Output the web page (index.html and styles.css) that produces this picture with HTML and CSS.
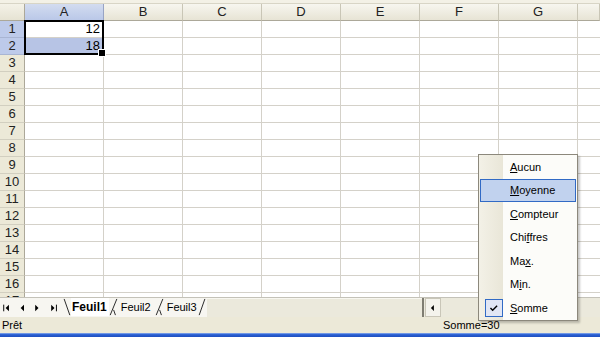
FILE: index.html
```html
<!DOCTYPE html>
<html lang="fr">
<head>
<meta charset="utf-8">
<title>Feuil1</title>
<link rel="stylesheet" href="styles.css">
</head>
<body>
<div class="app">
  <div class="topstrip"></div>
  <div class="sheet">
    <div class="corner"></div>
    <div class="colheads">
      <div class="ch sel">A</div>
      <div class="ch">B</div>
      <div class="ch">C</div>
      <div class="ch">D</div>
      <div class="ch">E</div>
      <div class="ch">F</div>
      <div class="ch">G</div>
      <div class="ch last"></div>
    </div>
    <div class="rowheads">
      <div class="rh sel">1</div>
      <div class="rh sel">2</div>
      <div class="rh">3</div>
      <div class="rh">4</div>
      <div class="rh">5</div>
      <div class="rh">6</div>
      <div class="rh">7</div>
      <div class="rh">8</div>
      <div class="rh">9</div>
      <div class="rh">10</div>
      <div class="rh">11</div>
      <div class="rh">12</div>
      <div class="rh">13</div>
      <div class="rh">14</div>
      <div class="rh">15</div>
      <div class="rh">16</div>
      <div class="rh">17</div>
    </div>
    <div class="cells">
      <div class="val r1">12</div>
      <div class="val r2 shaded">18</div>
      <div class="selbox"></div>
    </div>
  </div>

  <div class="tabstrip">
    <div class="nav">
      <svg class="nb w16" viewBox="0 0 16 20"><rect x="3" y="7" width="1" height="7"/><path d="M9 7 L9 14 L5.5 10.5 Z"/></svg>
      <svg class="nb w15" viewBox="0 0 15 20"><path d="M8 7 L8 14 L4.5 10.5 Z"/></svg>
      <svg class="nb w16" viewBox="0 0 16 20"><path d="M4 7 L4 14 L7.5 10.5 Z"/></svg>
      <svg class="nb w15" viewBox="0 0 15 20"><path d="M4 7 L4 14 L7.5 10.5 Z"/><rect x="9" y="7" width="1" height="7"/></svg>
    </div>
    <div class="tabs">
      <svg class="edge w9" viewBox="0 0 9 20"><path d="M2 1 L8 18"/></svg>
      <span class="tab active">Feuil1</span>
      <svg class="edge w10" viewBox="0 0 10 20"><path d="M8 1 L1 18 M4.6 12.5 L6.5 18"/></svg>
      <span class="tab t2">Feuil2</span>
      <svg class="edge w10" viewBox="0 0 10 20"><path d="M8 1 L1 18 M4.6 12.5 L6.5 18"/></svg>
      <span class="tab t3">Feuil3</span>
      <svg class="edge w9" viewBox="0 0 9 20"><path d="M7 1 L1 18"/></svg>
    </div>
    <div class="hscroll"></div>
    <div class="split"></div>
    <div class="sbtn"><svg viewBox="0 0 16 20" class="sico"><path d="M9 7 L9 14 L5.5 10.5 Z"/></svg></div>
    <div class="rest"></div>
  </div>

  <div class="status">
    <span class="ready">Prêt</span>
    <span class="sum">Somme=30</span>
  </div>
  <div class="taskbar"></div>

  <div class="menu">
    <div class="mi"><span class="ico"></span><span><u>A</u>ucun</span></div>
    <div class="mi hl"><span class="ico"></span><span><u>M</u>oyenne</span></div>
    <div class="mi"><span class="ico"></span><span><u>C</u>ompteur</span></div>
    <div class="mi"><span class="ico"></span><span>Chi<u>f</u>fres</span></div>
    <div class="mi"><span class="ico"></span><span>Ma<u>x</u>.</span></div>
    <div class="mi"><span class="ico"></span><span>M<u>i</u>n.</span></div>
    <div class="mi"><span class="ico checked"><svg viewBox="0 0 18 18" class="chk"><path d="M5 9 L7.5 11.5 L12.5 6.5"/></svg></span><span><u>S</u>omme</span></div>
  </div>
</div>
</body>
</html>
```

FILE: styles.css
```css
* { box-sizing: border-box; }

html, body {
  margin: 0;
  padding: 0;
}

body {
  width: 600px;
  height: 337px;
  overflow: hidden;
  background: #ece9d8;
  font-family: "Liberation Sans", Arial, sans-serif;
  color: #000;
}

.app {
  position: relative;
  display: flex;
  flex-direction: column;
  width: 600px;
  height: 337px;
}

.topstrip {
  height: 4px;
  flex: none;
  background: #f3f1e6;
  border-bottom: 1px solid #d8d5c6;
}

/* ---------- sheet ---------- */
.sheet {
  height: 293px;
  flex: none;
  display: grid;
  grid-template-columns: 25px 1fr;
  grid-template-rows: 17px 1fr;
  overflow: hidden;
  background: #fff;
}

.corner {
  background: linear-gradient(#f4f2e8, #e6e3d3);
  border-right: 1px solid #aca899;
  border-bottom: 1px solid #aca899;
}

.colheads {
  display: flex;
}

.ch {
  flex: 0 0 79px;
  height: 17px;
  border-right: 1px solid #c9c6b6;
  border-bottom: 1px solid #aca899;
  background: linear-gradient(#f7f6ef, #e7e4d5);
  font-size: 13px;
  line-height: 16px;
  text-align: center;
  color: #222;
}

.ch.last { flex: 1 1 auto; }

.ch.sel {
  background: linear-gradient(#d3dcf0, #bac8e8);
  border-right-color: #98a4c4;
}

.rowheads {
  display: flex;
  flex-direction: column;
}

.rh {
  flex: none;
  height: 17px;
  border-right: 1px solid #aca899;
  border-bottom: 1px solid #d2cfc0;
  background: #ece9d8;
  font-size: 13px;
  line-height: 16px;
  text-align: center;
  color: #222;
}

.rh.sel {
  background: #bdcaea;
  border-bottom-color: #a9b5d3;
}

.cells {
  display: grid;
  grid-template-columns: repeat(7, 79px) 1fr;
  grid-template-rows: repeat(17, 17px);
  background-image:
    repeating-linear-gradient(to right, transparent 0 78px, #d4d1c9 78px 79px),
    repeating-linear-gradient(to bottom, transparent 0 16px, #d4d1c9 16px 17px);
}

.val {
  grid-column: 1;
  width: 78px;
  height: 16px;
  font-size: 13px;
  line-height: 16px;
  text-align: right;
  padding-right: 3px;
}

.r1 { grid-row: 1; }
.r2 { grid-row: 2; }

.shaded { background: #b7c4e5; }

.selbox {
  grid-column: 1;
  grid-row: 1 / 3;
  margin: -1px 0 0 -1px;
  border: 2px solid #000;
  position: relative;
}

.selbox::after {
  content: "";
  position: absolute;
  right: -4px;
  bottom: -4px;
  width: 6px;
  height: 6px;
  background: #000;
  border: 1px solid #fff;
}

/* ---------- tab strip ---------- */
.tabstrip {
  height: 20px;
  flex: none;
  display: flex;
  background: #f7f6f1;
  border-top: 1px solid #c4c2b8;
}

.nav {
  display: flex;
  width: 62px;
  flex: none;
}

.nb { height: 19px; fill: #000; }
.w16 { width: 16px; }
.w15 { width: 15px; }

.tabs {
  display: flex;
  align-items: flex-start;
  flex: none;
}

.edge {
  height: 19px;
  fill: none;
  stroke: #222;
  stroke-width: 1;
}
.w9 { width: 9px; }
.w10 { width: 10px; }

.tab {
  height: 18px;
  font-size: 11px;
  line-height: 18px;
  white-space: nowrap;
}

.tab.active {
  font-weight: bold;
  font-size: 12px;
  padding: 0 2px 0 1px;
  background: #fff;
}

.tab.t2 { padding: 0 4px 0 2px; }
.tab.t3 { padding: 0 1px 0 2px; }

.hscroll {
  flex: 1 1 auto;
  background: #ebe9dc;
  border-top: 1px solid #f8f7f0;
}

.split {
  width: 3px;
  flex: none;
  background: #ebe9dc;
  border-left: 2px solid #7f7d72;
}

.sbtn {
  width: 16px;
  flex: none;
  background: #f4f3ec;
  border: 1px solid #c9c6b8;
}

.sico {
  width: 14px;
  height: 17px;
  fill: #000;
  display: block;
}

.rest {
  width: 159px;
  flex: none;
  background: #ebe9dc;
}

/* ---------- status ---------- */
.status {
  height: 16px;
  flex: none;
  display: grid;
  grid-template-columns: 443px 1fr;
  font-size: 11px;
  line-height: 16px;
  background: #ece9d8;
}

.ready { padding-left: 2px; }

.taskbar {
  height: 4px;
  flex: none;
  background: linear-gradient(#8fb0ee, #2a5fd3 40%, #1f4fbf);
}

/* ---------- popup menu ---------- */
.menu {
  position: absolute;
  left: 478px;
  top: 154px;
  width: 100px;
  padding: 0 1px;
  border: 1px solid #8c887c;
  background: linear-gradient(to right, #f3f1e7 0, #e9e6d8 24px, #fcfcf9 24px);
  box-shadow: 2px 2px 2px rgba(0, 0, 0, 0.22);
  font-size: 11px;
  color: #000;
}

.mi {
  height: 23.5px;
  display: flex;
  align-items: center;
  border: 1px solid transparent;
}

.mi.hl {
  background: #c1d2ee;
  border-color: #316ac5;
}

.ico {
  width: 18px;
  height: 18px;
  margin-left: 4px;
  margin-right: 7px;
  flex: none;
}

.ico.checked {
  background: #e1e6f4;
  border: 1px solid #316ac5;
}

.chk {
  display: block;
  width: 16px;
  height: 16px;
  fill: none;
  stroke: #000;
  stroke-width: 1.6;
}

.mi u { text-decoration: underline; }
```
